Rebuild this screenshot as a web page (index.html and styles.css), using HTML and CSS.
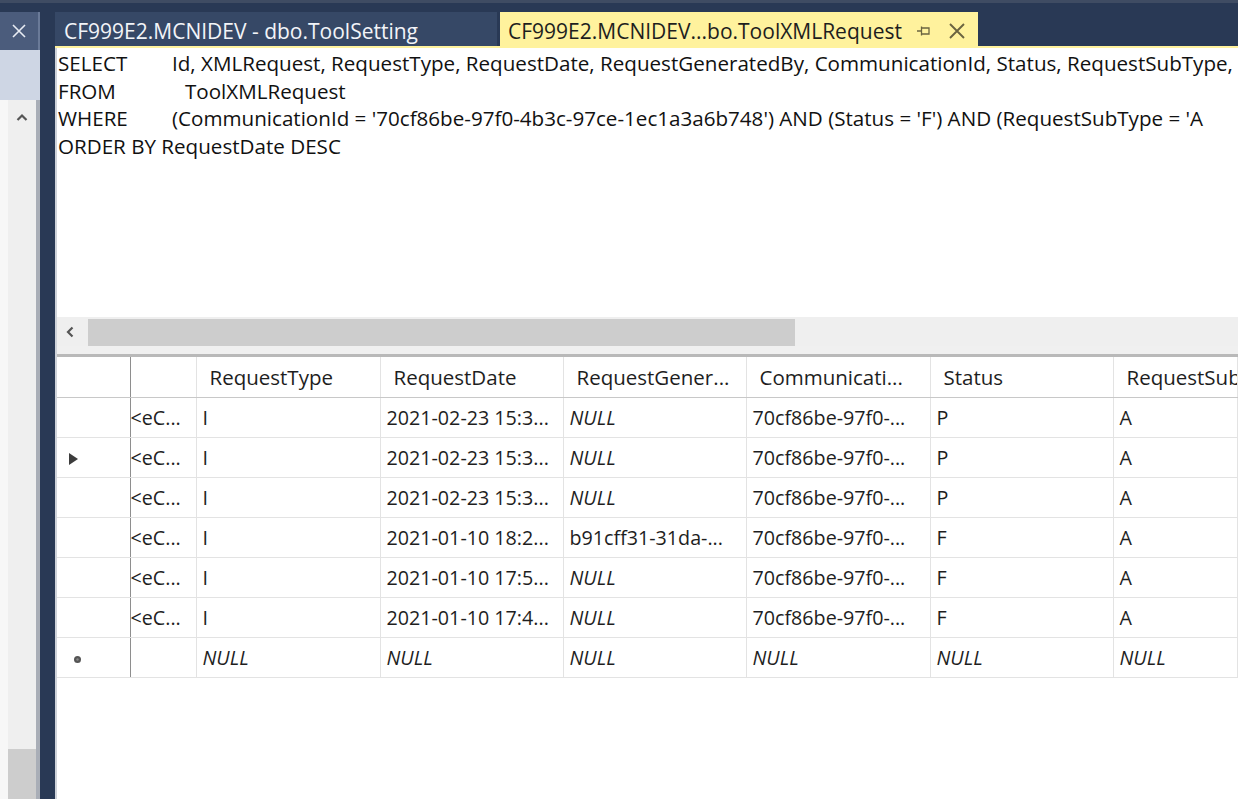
FILE: index.html
```html
<!DOCTYPE html>
<html>
<head>
<meta charset="utf-8">
<link rel="stylesheet" href="styles.css">
</head>
<body>
<div class="app">
  <div class="topbar"></div>
  <div class="main">
    <div class="leftpanel">
      <div class="lp-tab">
        <svg width="16" height="16" viewBox="0 0 16 16"><path d="M2 2L14 14M14 2L2 14" stroke="#e8ecf3" stroke-width="1.6" fill="none"/></svg>
      </div>
      <div class="lp-band"></div>
      <div class="lp-body">
        <div class="lp-white"></div>
        <div class="lp-scroll">
          <svg class="up" width="12" height="8" viewBox="0 0 12 8"><path d="M1.5 7L6 2.5L10.5 7" stroke="#555" stroke-width="2.2" fill="none"/></svg>
          <div class="lp-thumb"></div>
        </div>
        <div class="lp-edge"></div>
      </div>
    </div>
    <div class="navy-gap"></div>
    <div class="doc">
      <div class="tabstrip">
        <div class="tab inactive">CF999E2.MCNIDEV - dbo.ToolSetting</div>
        <div class="tab active">
          <span class="tab-title">CF999E2.MCNIDEV...bo.ToolXMLRequest</span>
          <svg class="pin" width="14" height="12" viewBox="0 0 14 12"><path d="M0 6H4M4.5 1.5V10.5M4.5 3H12V9H4.5" stroke="#6b6440" stroke-width="1.3" fill="none"/></svg>
          <svg class="close" width="18" height="18" viewBox="0 0 18 18"><path d="M2 2L16 16M16 2L2 16" stroke="#6b6440" stroke-width="1.9" fill="none"/></svg>
        </div>
      </div>
      <div class="yellow-line"></div>
      <div class="content">
        <div class="sql">
          <div class="sql-line"><span class="kw">SELECT</span><span>Id, XMLRequest, RequestType, RequestDate, RequestGeneratedBy, CommunicationId, Status, RequestSubType,</span></div>
          <div class="sql-line"><span class="kw">FROM</span><span class="from-val">ToolXMLRequest</span></div>
          <div class="sql-line"><span class="kw">WHERE</span><span>(CommunicationId = '70cf86be-97f0-4b3c-97ce-1ec1a3a6b748') AND (Status = 'F') AND (RequestSubType = 'A</span></div>
          <div class="sql-line"><span>ORDER BY RequestDate DESC</span></div>
        </div>
        <div class="hscroll">
          <svg class="left" width="10" height="12" viewBox="0 0 10 12"><path d="M7.5 1.5L3 6L7.5 10.5" stroke="#555" stroke-width="2.2" fill="none"/></svg>
          <div class="hthumb"></div>
        </div>
        <div class="splitter"></div>
        <table class="grid">
          <colgroup>
            <col class="c-rh"><col class="c-xml"><col class="c-w184"><col class="c-w183"><col class="c-w183"><col class="c-w184"><col class="c-w183"><col>
          </colgroup>
          <thead>
            <tr>
              <th class="rh"></th><th class="xml"></th>
              <th>RequestType</th><th>RequestDate</th><th>RequestGener...</th><th>Communicati...</th><th>Status</th><th>RequestSub</th>
            </tr>
          </thead>
          <tbody>
            <tr><td class="rh"></td><td class="xml">&lt;eC...</td><td>I</td><td>2021-02-23 15:3...</td><td class="null">NULL</td><td>70cf86be-97f0-...</td><td>P</td><td>A</td></tr>
            <tr><td class="rh"><span class="tri"></span></td><td class="xml">&lt;eC...</td><td>I</td><td>2021-02-23 15:3...</td><td class="null">NULL</td><td>70cf86be-97f0-...</td><td>P</td><td>A</td></tr>
            <tr><td class="rh"></td><td class="xml">&lt;eC...</td><td>I</td><td>2021-02-23 15:3...</td><td class="null">NULL</td><td>70cf86be-97f0-...</td><td>P</td><td>A</td></tr>
            <tr><td class="rh"></td><td class="xml">&lt;eC...</td><td>I</td><td>2021-01-10 18:2...</td><td>b91cff31-31da-...</td><td>70cf86be-97f0-...</td><td>F</td><td>A</td></tr>
            <tr><td class="rh"></td><td class="xml">&lt;eC...</td><td>I</td><td>2021-01-10 17:5...</td><td class="null">NULL</td><td>70cf86be-97f0-...</td><td>F</td><td>A</td></tr>
            <tr><td class="rh"></td><td class="xml">&lt;eC...</td><td>I</td><td>2021-01-10 17:4...</td><td class="null">NULL</td><td>70cf86be-97f0-...</td><td>F</td><td>A</td></tr>
            <tr class="newrow"><td class="rh"><svg class="star" width="9" height="9" viewBox="0 0 9 9"><circle cx="4.5" cy="4.5" r="3.5" fill="#555"/><circle cx="4.5" cy="4.5" r="1.2" fill="#888"/></svg></td><td class="xml"></td><td class="null">NULL</td><td class="null">NULL</td><td class="null">NULL</td><td class="null">NULL</td><td class="null">NULL</td><td class="null">NULL</td></tr>
          </tbody>
        </table>
      </div>
    </div>
  </div>
</div>
</body>
</html>
```

FILE: styles.css
```css
* { box-sizing: border-box; }
html, body { margin: 0; padding: 0; }
body {
  width: 1238px;
  height: 799px;
  overflow: hidden;
  background: #293955;
  font-family: "Open Sans", "Noto Sans", sans-serif;
}
.app { display: flex; flex-direction: column; height: 799px; }
.topbar {
  height: 12px;
  background: #293955;
  border-top: 3px solid #3f4c63;
  flex: none;
}
.main { display: flex; flex: 1; min-height: 0; }

.leftpanel { width: 40px; display: flex; flex-direction: column; flex: none; }
.lp-tab {
  height: 38px;
  background: #4b5c7c;
  border-right: 2px solid #6a7a98;
  display: flex; align-items: center; justify-content: center;
}
.lp-band { height: 50px; background: #ced6e4; }
.lp-body { flex: 1; display: flex; }
.lp-white { width: 8px; background: #f7f7f7; }
.lp-scroll { width: 28px; background: #efefef; position: relative; }
.lp-scroll .up { position: absolute; left: 8px; top: 13px; }
.lp-thumb { position: absolute; left: 0; right: 0; bottom: 0; height: 50px; background: #cdcdcd; }
.lp-edge { width: 4px; background: #a9aeb7; }

.navy-gap { width: 15px; background: #293955; flex: none; }

.doc { flex: 1; display: flex; flex-direction: column; min-width: 0; }
.tabstrip { height: 34px; display: flex; align-items: stretch; flex: none; }
.tab {
  font-size: 21px;
  display: flex; align-items: center;
  white-space: nowrap;
  padding-top: 3px;
}
.tab.inactive {
  width: 442px;
  padding-left: 9px;
  color: #f2f4f8;
  background: #364866;
}
.tab.active {
  margin-left: 3px;
  width: 478px;
  padding-left: 8px;
  background: #fff29d;
  color: #1e1e1e;
}
.tab-title { flex: none; }
.pin { margin-left: 15px; }
.close { margin-left: 17px; }
.yellow-line { height: 2px; background: #fff29d; flex: none; }

.content {
  flex: 1;
  background: #fff;
  border-left: 2px solid #cfd3da;
  display: flex; flex-direction: column;
  min-height: 0;
  overflow: hidden;
}
.sql {
  height: 268px;
  flex: none;
  padding: 2px 0 0 1px;
  font-size: 20.6px;
  color: #111;
  white-space: nowrap;
  overflow: hidden;
}
.sql-line { height: 27.5px; line-height: 27.5px; display: flex; }
.kw { width: 114px; flex: none; }
.from-val { padding-left: 13px; }

.hscroll {
  height: 29px;
  flex: none;
  background: #efefef;
  position: relative;
  margin-top: 1px;
}
.hscroll .left { position: absolute; left: 8px; top: 9px; }
.hthumb { position: absolute; left: 31px; width: 707px; top: 2px; bottom: 0; background: #cdcdcd; }
.splitter {
  height: 11px;
  flex: none;
  background: #f0f0f0;
  border-bottom: 3px solid #b9b9b9;
}

.grid {
  border-collapse: collapse;
  table-layout: fixed;
  width: 1181px;
  font-size: 19.7px;
  color: #1e1e1e;
}
.c-rh { width: 73px; }
.c-xml { width: 66px; }
.c-w184 { width: 184px; }
.c-w183 { width: 183px; }
.grid th, .grid td {
  height: 40px;
  padding: 0 0 0 6px;
  white-space: nowrap;
  overflow: hidden;
  text-align: left;
  border: 1px solid #e3e3e3;
  vertical-align: middle;
}
.grid th {
  font-weight: normal;
  font-size: 20.5px;
  padding-left: 13px;
  border-bottom: 1px solid #c8c8c8;
  border-top: none;
}
.grid .rh { border-left: none; border-right: 1px solid #8e8e8e; padding-left: 0; }
.grid .xml { padding-left: 0; }
.tri {
  display: inline-block;
  margin-left: 12px;
  width: 0; height: 0;
  border-top: 6px solid transparent;
  border-bottom: 6px solid transparent;
  border-left: 9px solid #3c3c3c;
  vertical-align: middle;
}
.star { margin-left: 16px; vertical-align: middle; }
.null { font-style: italic; }
```
